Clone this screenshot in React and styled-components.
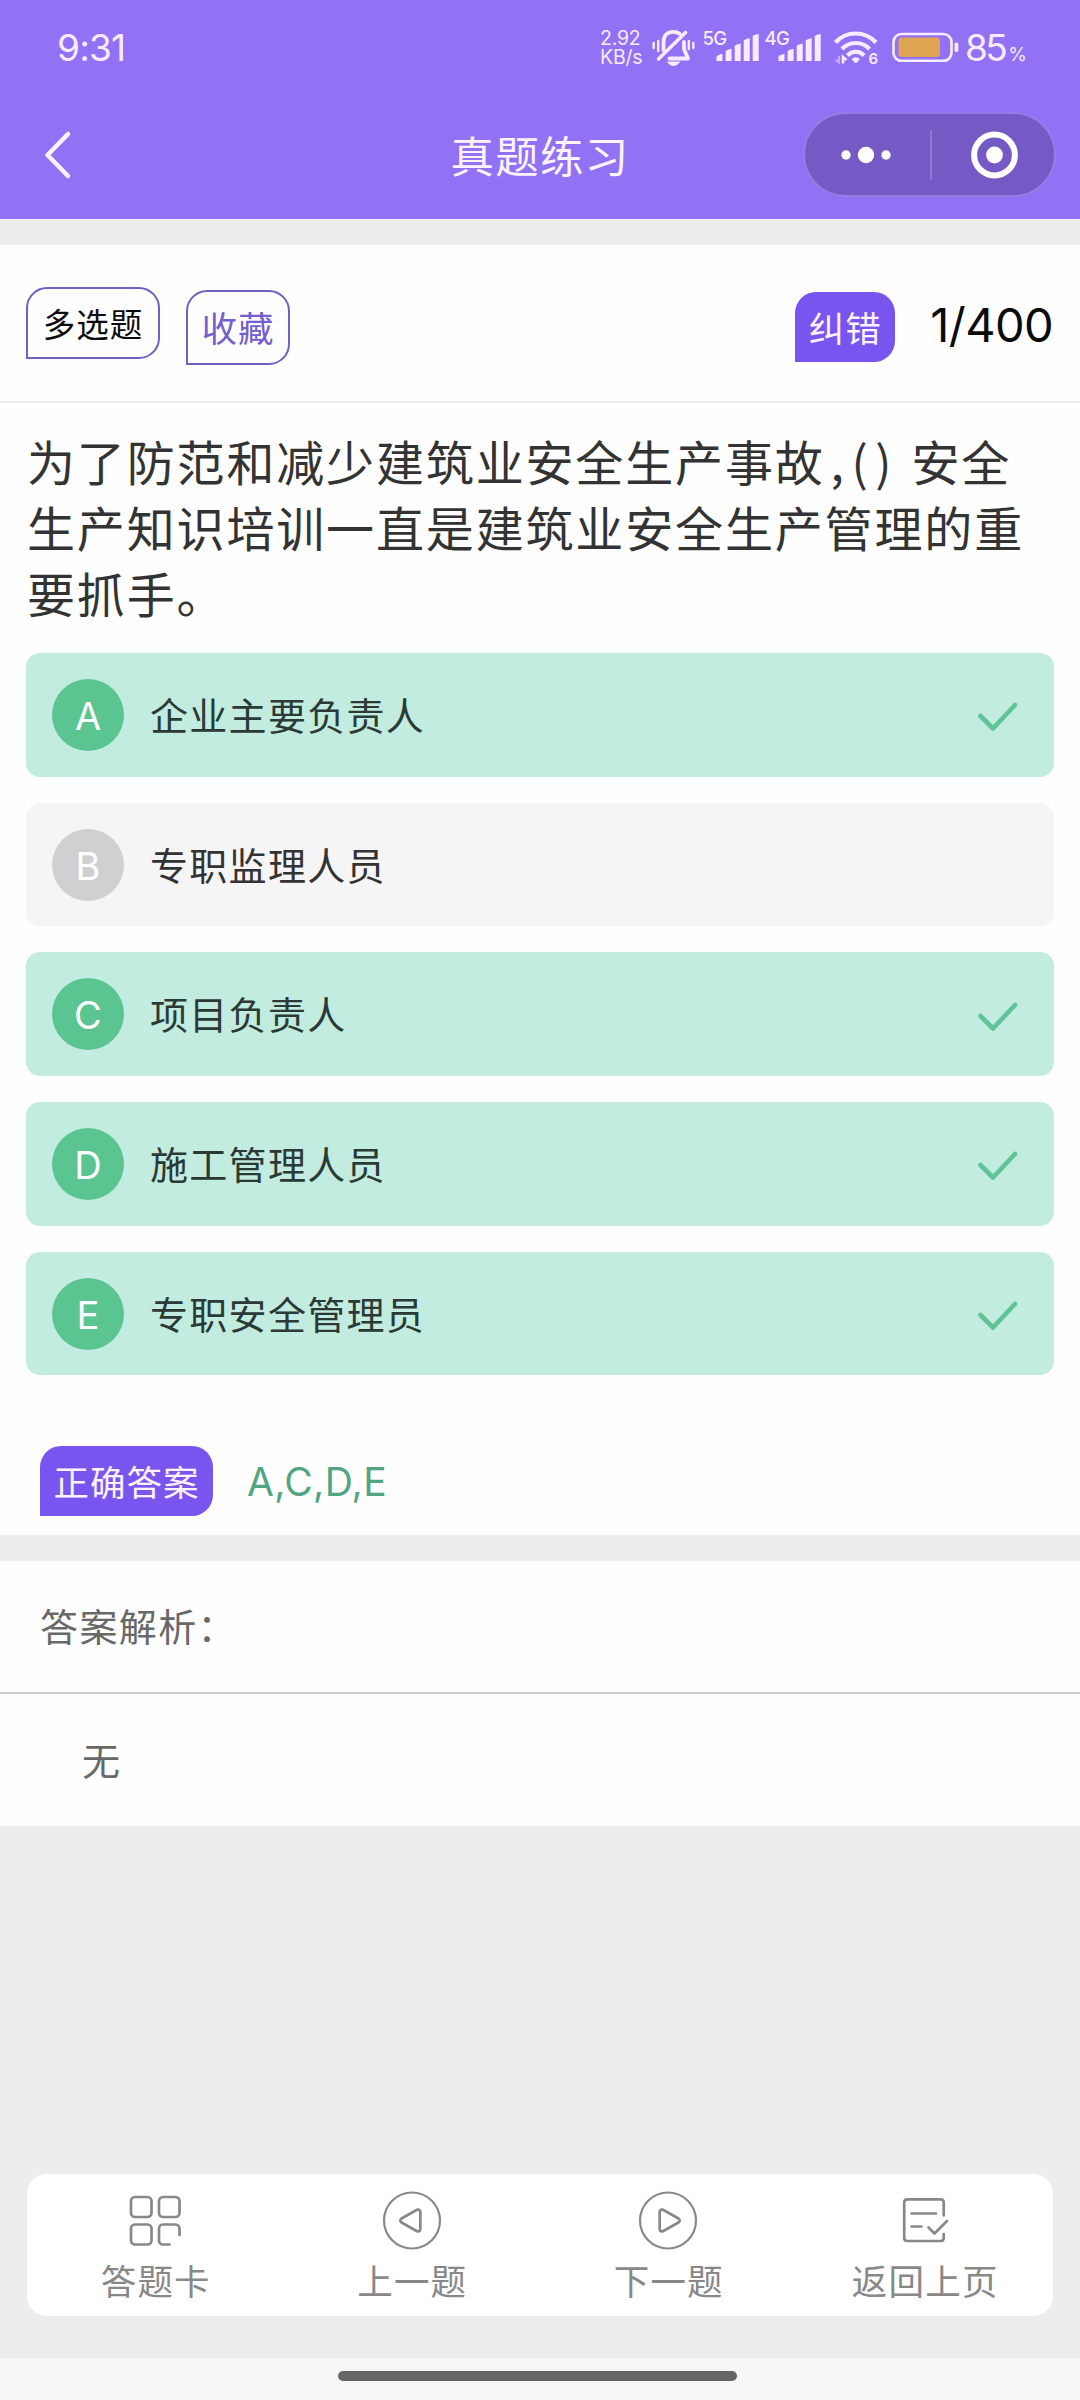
import styled, { createGlobalStyle } from "styled-components";

const cjk = `"Noto Sans CJK SC", sans-serif`;
const latin = `Inter, "Noto Sans CJK SC", sans-serif`;

const GlobalStyle = createGlobalStyle`
  * {
    box-sizing: border-box;
  }
  body {
    margin: 0;
    background: #ededed;
    font-family: ${cjk};
  }
  svg {
    display: block;
    flex: none;
  }
`;

const Screen = styled.div`
  display: flex;
  flex-direction: column;
  width: 1080px;
  height: 2400px;
  overflow: hidden;
  background: #ededed;
`;

const Header = styled.header`
  flex: none;
  height: 219px;
  background: #9172f4;
  color: #fdf2ff;
`;

const StatusBar = styled.div`
  display: flex;
  justify-content: space-between;
  height: 91px;
  padding: 25px 56px 0 57px;
  font-family: ${latin};
  color: #f8eaff;
`;

const Clock = styled.span`
  font-size: 37px;
  line-height: 45px;
  letter-spacing: -0.8px;
`;

const StatusIcons = styled.div`
  display: flex;
  align-items: flex-start;
  width: 424px;
`;

const NetSpeed = styled.span`
  flex: none;
  width: 52px;
  padding-top: 4px;
  font-size: 19.5px;
  line-height: 19px;
  letter-spacing: -0.2px;
  white-space: pre;
`;

const IconSlot = styled.span`
  flex: none;
  margin-right: ${(p) => p.$after}px;
`;

const Percent = styled.span`
  flex: none;
  margin-left: 6px;
  font-size: 37px;
  line-height: 45px;
  letter-spacing: -2.6px;
  white-space: nowrap;

  small {
    margin-left: 3px;
    font-size: 19px;
    letter-spacing: 0;
  }
`;

const TitleBar = styled.div`
  display: grid;
  grid-template-columns: 1fr auto 1fr;
  align-items: center;
  height: 127px;
  padding: 0 24px 0 43px;
`;

const Title = styled.h1`
  margin: 0 19px 0 0;
  font-size: 43.5px;
  font-weight: 400;
  line-height: 60px;
  letter-spacing: 1.2px;
`;

const Capsule = styled.div`
  display: flex;
  align-items: center;
  justify-self: end;
  width: 253px;
  height: 85px;
  border: 2px solid #967de4;
  border-radius: 43px;
  background: #755ac5;
`;

const CapsuleDivider = styled.span`
  width: 2px;
  height: 50px;
  background: #8f78d3;
`;

const Question = styled.main`
  flex: none;
  height: 1290px;
  margin-top: 26px;
  background: #fefefe;
`;

const Toolbar = styled.div`
  display: flex;
  align-items: flex-start;
  justify-content: space-between;
  height: 158px;
  padding: 42px 27px 0 26px;
  border-bottom: 2px solid #f0f0f0;
`;

const ToolGroup = styled.div`
  display: flex;
  align-items: flex-start;
  gap: ${(p) => p.$gap}px;
`;

const Tag = styled.span`
  display: flex;
  flex: none;
  align-items: center;
  justify-content: center;
  width: ${(p) => p.$width}px;
  height: ${(p) => p.$height || 70}px;
  margin-top: ${(p) => p.$top || 0}px;
  padding-bottom: 1px;
  border: ${(p) => (p.$filled ? "none" : "2px solid #735fc4")};
  border-radius: 21px 21px 21px 0;
  background: ${(p) => (p.$filled ? "#7955f0" : "transparent")};
  color: ${(p) => p.$color || "#fdf2ff"};
  font-size: ${(p) => p.$size || 35.5}px;
  line-height: 50px;
  letter-spacing: 1px;
`;

const Counter = styled.span`
  margin-top: 8px;
  font-family: ${latin};
  font-size: 47px;
  line-height: 60px;
  letter-spacing: -0.6px;
  color: #0b0b0b;
`;

const Stem = styled.p`
  margin: 0;
  padding: 24px 24px 0 27px;
  font-size: 48px;
  line-height: 66px;
  letter-spacing: 1.85px;
  color: #333;
  white-space: nowrap;
`;

const Blank = styled.span`
  margin-left: 6px;
  letter-spacing: 7.5px;
`;

const Options = styled.ul`
  display: flex;
  flex-direction: column;
  gap: 26px;
  margin: 28px 26px 0;
  padding: 0;
  list-style: none;
`;

const Option = styled.li`
  display: flex;
  align-items: center;
  height: 123.7px;
  padding: 0 36px 0 26px;
  border-radius: 14px;
  background: ${(p) => (p.$correct ? "#c1ecdf" : "#f5f5f5")};

  svg {
    margin-top: 3px;
  }
`;

const Letter = styled.span`
  display: flex;
  align-items: center;
  justify-content: center;
  width: 72px;
  height: 72px;
  margin-right: 26px;
  padding-top: 2px;
  border-radius: 50%;
  background: ${(p) => (p.$correct ? "#5bc592" : "#d0d0d0")};
  color: #fff;
  font-family: ${latin};
  font-size: 38px;
  line-height: 46px;
`;

const OptionText = styled.span`
  flex: 1;
  margin-top: -2px;
  font-size: 38px;
  line-height: 56px;
  letter-spacing: 1.3px;
  color: ${(p) => (p.$correct ? "#2b3a35" : "#333")};
`;

const Answer = styled.div`
  display: flex;
  align-items: flex-start;
  padding: 71px 40px 0;
`;

const AnswerKeys = styled.span`
  margin: 11px 0 0 34px;
  font-family: ${latin};
  font-size: 39px;
  line-height: 50px;
  letter-spacing: 0.4px;
  color: #51a583;
`;

const Analysis = styled.section`
  flex: none;
  height: 265px;
  margin-top: 26px;
  background: #fefefe;
  font-size: 38px;
  line-height: 56px;
  letter-spacing: 1.4px;
  color: #686868;
`;

const AnalysisTitle = styled.div`
  height: 133px;
  padding: 36px 40px 0;
  border-bottom: 2px solid #ccc;
`;

const AnalysisBody = styled.div`
  padding: 37px 82px 0;
`;

const TabBar = styled.nav`
  display: grid;
  grid-template-columns: repeat(4, 1fr);
  flex: none;
  height: 142px;
  margin: auto 27px 42px;
  border-radius: 20px;
  background: #fff;
`;

const Tab = styled.div`
  display: flex;
  flex-direction: column;
  align-items: center;
  padding-top: 16px;
  font-size: 35.5px;
  line-height: 50px;
  letter-spacing: 1.2px;
  text-indent: 1px;
  color: #888;

  svg {
    margin-bottom: 5px;
  }
`;

const GestureArea = styled.footer`
  flex: none;
  height: 42px;
  padding-top: 13px;
  background: #f6f6f6;
`;

const GestureBar = styled.div`
  width: 399px;
  height: 10px;
  margin-left: 338px;
  border-radius: 5px;
  background: #666;
`;

const MutedBell = () => (
  <svg width="43" height="42" viewBox="0 0 43 42" fill="none" stroke="currentColor" strokeLinecap="round" strokeLinejoin="round">
    <path strokeWidth="3.8" d="M11.5 25V17C11.5 10.5 15.5 6.8 21.5 6.8C24 6.8 26 7.5 27.6 8.7M32 17V24L36 33.5H17.5" />
    <path strokeWidth="3.6" d="M33.5 7.5L6.5 34" />
    <path strokeWidth="2.4" d="M1.7 18V23M6.2 16V26M41.3 18V23M36.8 16V24" />
    <path fill="currentColor" stroke="none" d="M14.5 36.5H28.5C26.5 39 24 41 21.5 41S16.5 39 14.5 36.5Z" />
  </svg>
);

const bars = [
  "M13.5 36V31.5Q15 29.5 19.5 29V36Z",
  "M22.6 36V26.5Q24 24.5 28.6 23.8V36Z",
  "M31.7 36V21Q33 19.3 37.7 18.5V36Z",
  "M40.7 36V15.5Q42 14 46.7 13V36Z",
  "M49.7 36V11Q51 9.7 55.7 9V36Z",
];

const Signal = ({ label }) => (
  <svg width="57" height="42" viewBox="0 0 57 42" fill="currentColor">
    <text x="-0.5" y="20" fontSize="18.5" fontWeight="500" letterSpacing="-0.6">{label}</text>
    <path d={bars.join("")} />
  </svg>
);

const Wifi = () => (
  <svg width="44" height="42" viewBox="0 0 44 42" fill="none" stroke="currentColor" strokeWidth="4.2">
    <path d="M1.5 17.5C12 5.5 31 5.5 42 17.5" />
    <path d="M8 24C15.5 16 28 16 35.5 24" />
    <path d="M13.5 30.5C18 25.5 25.5 25.5 30 30.5" />
    <path d="M17.5 34Q21.7 30.5 26 34L22.8 37.5Q21.7 38.5 20.6 37.5Z" fill="currentColor" stroke="none" />
    <path d="M5 31V37.5L1.5 34.5" strokeWidth="2" opacity="0.5" />
    <path d="M9 38.5V32L12.5 35" strokeWidth="2.6" />
    <text x="34.5" y="38.5" fontSize="15" fontWeight="600" fill="currentColor" stroke="none">6</text>
  </svg>
);

const Battery = () => (
  <svg width="67" height="42" viewBox="0 0 67 42" fill="none">
    <rect x="1.5" y="9" width="58" height="26.8" rx="8" stroke="currentColor" strokeWidth="2.6" />
    <rect x="6.5" y="12.5" width="41.5" height="19.5" rx="3" fill="#dfa452" />
    <rect x="62.5" y="17.5" width="3.8" height="9.5" rx="1.8" fill="currentColor" />
  </svg>
);

const BackArrow = () => (
  <svg width="30" height="50" viewBox="0 0 30 50" fill="none">
    <path d="M25 4L4.5 25L25 46" stroke="currentColor" strokeWidth="4.5" strokeLinecap="round" strokeLinejoin="round" />
  </svg>
);

const More = () => (
  <svg width="125" height="50" viewBox="0 0 125 50" fill="#fff">
    <circle cx="41" cy="25" r="4.7" />
    <circle cx="61" cy="25" r="8.2" />
    <circle cx="81" cy="25" r="4.7" />
  </svg>
);

const CloseRing = () => (
  <svg width="122" height="50" viewBox="0 0 122 50" fill="#fff">
    <circle cx="62.5" cy="25" r="20.4" fill="none" stroke="#fff" strokeWidth="6" />
    <circle cx="62.5" cy="25" r="8.4" />
  </svg>
);

const Tick = () => (
  <svg width="40" height="30" viewBox="0 0 40 30" fill="none">
    <path d="M2.5 15L15 27.5L37 4" stroke="#5fc396" strokeWidth="4.6" strokeLinecap="round" strokeLinejoin="round" />
  </svg>
);

const TabIcon = ({ children }) => (
  <svg width="60" height="60" viewBox="0 0 60 60" fill="none" stroke="#888" strokeWidth="2.7" strokeLinecap="round" strokeLinejoin="round">
    {children}
  </svg>
);

const GridIcon = () => (
  <TabIcon>
    <rect x="6" y="7" width="20.5" height="20" rx="4" />
    <rect x="34" y="7" width="20.5" height="20" rx="4" />
    <rect x="6" y="34.5" width="20.5" height="20" rx="4" />
    <path d="M44.5 54.5H38A4 4 0 0 1 34 50.5V38.5A4 4 0 0 1 38 34.5H50.5A4 4 0 0 1 54.5 38.5V45" />
  </TabIcon>
);

const PrevIcon = () => (
  <TabIcon>
    <circle cx="30" cy="30.5" r="28" strokeWidth="2.2" />
    <path d="M35 19.8L19.5 28.5Q17 30.5 19.5 32.5L35 41.2Q38.3 42 38.3 38.5V22.5Q38.3 19 35 19.8Z" />
  </TabIcon>
);

const NextIcon = () => (
  <TabIcon>
    <circle cx="30" cy="30.5" r="28" strokeWidth="2.2" />
    <path d="M25 19.8L40.5 28.5Q43 30.5 40.5 32.5L25 41.2Q21.7 42 21.7 38.5V22.5Q21.7 19 25 19.8Z" />
  </TabIcon>
);

const SheetIcon = () => (
  <TabIcon>
    <path d="M48.7 25.5V12A3 3 0 0 0 45.7 9.3H12A3 3 0 0 0 9.2 12V48.5A3 3 0 0 0 12 51H45.7A3 3 0 0 0 48.7 48.5V44" />
    <path d="M16.5 23.5H41M16.5 36.5H26.5M33.5 37.5L39.5 43.5L52 31" />
  </TabIcon>
);

const options = [
  { key: "A", text: "企业主要负责人", correct: true },
  { key: "B", text: "专职监理人员", correct: false },
  { key: "C", text: "项目负责人", correct: true },
  { key: "D", text: "施工管理人员", correct: true },
  { key: "E", text: "专职安全管理员", correct: true },
];

const tabs = [
  { label: "答题卡", Icon: GridIcon },
  { label: "上一题", Icon: PrevIcon },
  { label: "下一题", Icon: NextIcon },
  { label: "返回上页", Icon: SheetIcon },
];

export default function App() {
  return (
    <Screen>
      <GlobalStyle />
      <Header>
        <StatusBar>
          <Clock>9:31</Clock>
          <StatusIcons>
            <NetSpeed>{"2.92\nKB/s"}</NetSpeed>
            <IconSlot $after={8}>
              <MutedBell />
            </IconSlot>
            <IconSlot $after={5}>
              <Signal label="5G" />
            </IconSlot>
            <IconSlot $after={12}>
              <Signal label="4G" />
            </IconSlot>
            <IconSlot $after={14}>
              <Wifi />
            </IconSlot>
            <Battery />
            <Percent>
              85<small>%</small>
            </Percent>
          </StatusIcons>
        </StatusBar>
        <TitleBar>
          <BackArrow />
          <Title>真题练习</Title>
          <Capsule>
            <More />
            <CapsuleDivider />
            <CloseRing />
          </Capsule>
        </TitleBar>
      </Header>

      <Question>
        <Toolbar>
          <ToolGroup $gap={26}>
            <Tag $width={134} $height={72} $color="#0b0b0b" $size={32.5}>多选题</Tag>
            <Tag $width={104} $height={75} $top={3} $color="#735fd0">收藏</Tag>
          </ToolGroup>
          <ToolGroup $gap={35}>
            <Tag $width={100} $top={5} $filled>纠错</Tag>
            <Counter>1/400</Counter>
          </ToolGroup>
        </Toolbar>
        <Stem>
          为了防范和减少建筑业安全生产事故<Blank>,()</Blank> 安全
          <br />
          生产知识培训一直是建筑业安全生产管理的重
          <br />
          要抓手。
        </Stem>
        <Options>
          {options.map(({ key, text, correct }) => (
            <Option key={key} $correct={correct}>
              <Letter $correct={correct}>{key}</Letter>
              <OptionText $correct={correct}>{text}</OptionText>
              {correct && <Tick />}
            </Option>
          ))}
        </Options>
        <Answer>
          <Tag $width={173} $filled>正确答案</Tag>
          <AnswerKeys>A,C,D,E</AnswerKeys>
        </Answer>
      </Question>

      <Analysis>
        <AnalysisTitle>答案解析：</AnalysisTitle>
        <AnalysisBody>无</AnalysisBody>
      </Analysis>

      <TabBar>
        {tabs.map(({ label, Icon }) => (
          <Tab key={label}>
            <Icon />
            {label}
          </Tab>
        ))}
      </TabBar>
      <GestureArea>
        <GestureBar />
      </GestureArea>
    </Screen>
  );
}
